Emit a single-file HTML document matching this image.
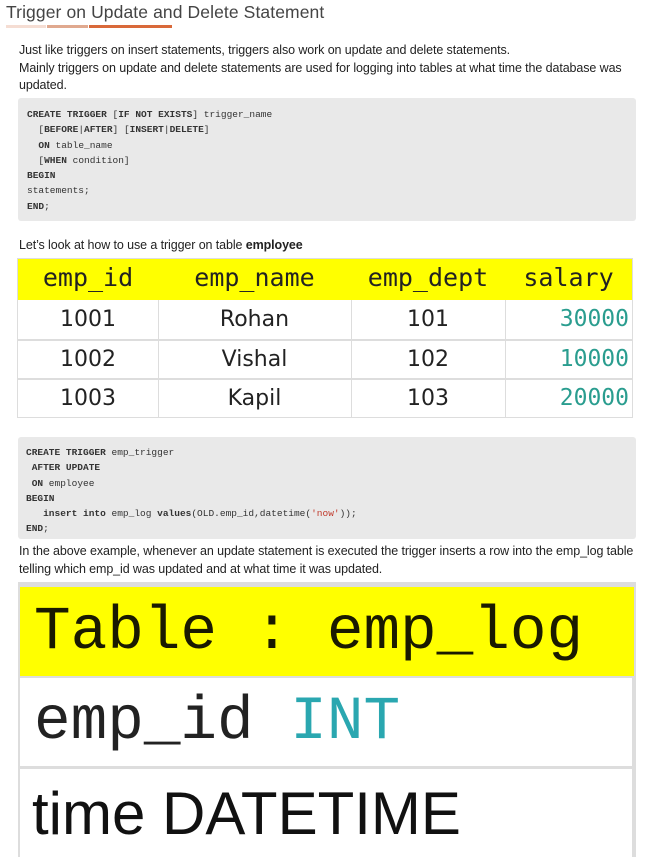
<!DOCTYPE html>
<html><head><meta charset="utf-8"><style>
*{margin:0;padding:0;box-sizing:border-box}
body{width:656px;height:857px;background:#fff;position:relative;overflow:hidden;font-family:"Liberation Sans","DejaVu Sans",sans-serif;color:#222}
.a{position:absolute;white-space:nowrap}
.t{font-size:12.5px;line-height:17.5px;letter-spacing:-0.1px}
.code{position:absolute;background:#e9e9e9;border-radius:3px;font-family:"Liberation Mono","DejaVu Sans Mono",monospace;font-size:9.5px;color:#333;white-space:pre}
.code div{height:15.3px;line-height:15.3px}
b{font-weight:bold}
</style></head><body>
<div class="a" style="left:6px;top:2px;font-size:17.5px;color:#444;letter-spacing:0.1px">Trigger on Update and Delete Statement</div>
<div class="a" style="left:6px;top:25px;width:40px;height:3px;background:#f5ddd3"></div>
<div class="a" style="left:47px;top:25px;width:41px;height:3px;background:#e0a98f"></div>
<div class="a" style="left:89px;top:25px;width:83px;height:3px;background:#d9693a"></div>

<div class="a t" style="left:19px;top:42px">Just like triggers on insert statements, triggers also work on update and delete statements.<br>Mainly triggers on update and delete statements are used for logging into tables at what time the database was<br>updated.</div>

<div class="code" style="left:18px;top:98px;width:618px;height:123px;padding:9px 0 0 9px"><div><b>CREATE TRIGGER</b> [<b>IF NOT EXISTS</b>] trigger_name</div><div>  [<b>BEFORE</b>|<b>AFTER</b>] [<b>INSERT</b>|<b>DELETE</b>]</div><div>  <b>ON</b> table_name</div><div>  [<b>WHEN</b> condition]</div><div><b>BEGIN</b></div><div>statements;</div><div><b>END</b>;</div></div>

<div class="a t" style="left:19px;top:237px">Let’s look at how to use a trigger on table <b>employee</b></div>

<div class="a" style="left:17px;top:258px;width:616px;height:160px;background:#fff;border:1px solid #ddd"></div>
<div class="a" style="left:18px;top:259px;width:614px;height:41px;background:#ffff00"></div>
<div class="a" style="left:158px;top:300px;width:1px;height:118px;background:#ddd"></div>
<div class="a" style="left:351px;top:300px;width:1px;height:118px;background:#ddd"></div>
<div class="a" style="left:505px;top:300px;width:1px;height:118px;background:#ddd"></div>
<div class="a" style="left:17px;top:339px;width:616px;height:2px;background:#ddd"></div>
<div class="a" style="left:17px;top:378px;width:616px;height:2px;background:#ddd"></div>
<div style="position:absolute;left:18px;top:259px;width:614px;font-family:'DejaVu Sans Mono',monospace;font-size:25px;color:#222">
<div class="a" style="left:0;width:140px;text-align:center;top:4px">emp_id</div>
<div class="a" style="left:140px;width:193px;text-align:center;top:4px">emp_name</div>
<div class="a" style="left:333px;width:154px;text-align:center;top:4px">emp_dept</div>
<div class="a" style="left:487px;width:127px;text-align:center;top:4px">salary</div>
</div>
<div style="position:absolute;left:18px;top:300px;width:614px;font-family:'DejaVu Sans',sans-serif;font-size:22px;color:#222">
<div class="a" style="left:0;width:140px;text-align:center;top:7px">1001</div>
<div class="a" style="left:140px;width:193px;text-align:center;top:7px">Rohan</div>
<div class="a" style="left:333px;width:154px;text-align:center;top:7px">101</div>
<div class="a" style="left:0;width:140px;text-align:center;top:47px">1002</div>
<div class="a" style="left:140px;width:193px;text-align:center;top:47px">Vishal</div>
<div class="a" style="left:333px;width:154px;text-align:center;top:47px">102</div>
<div class="a" style="left:0;width:140px;text-align:center;top:86px">1003</div>
<div class="a" style="left:140px;width:193px;text-align:center;top:86px">Kapil</div>
<div class="a" style="left:333px;width:154px;text-align:center;top:86px">103</div>
</div>
<div style="position:absolute;left:505px;top:300px;width:124px;font-family:'DejaVu Sans Mono',monospace;font-size:23px;color:#2a9d8f;text-align:right">
<div class="a" style="right:0;top:6px">30000</div>
<div class="a" style="right:0;top:46px">10000</div>
<div class="a" style="right:0;top:85px">20000</div>
</div>

<div class="code" style="left:18px;top:437px;width:618px;height:102px;padding:8px 0 0 8px"><div><b>CREATE TRIGGER</b> emp_trigger</div><div> <b>AFTER UPDATE</b></div><div> <b>ON</b> employee</div><div><b>BEGIN</b></div><div>   <b>insert into</b> emp_log <b>values</b>(OLD.emp_id,datetime(<span style="color:#c0392b">'now'</span>));</div><div><b>END</b>;</div></div>

<div class="a t" style="left:19px;top:543px">In the above example, whenever an update statement is executed the trigger inserts a row into the emp_log table<br>telling which emp_id was updated and at what time it was updated.</div>

<div class="a" style="left:18px;top:582px;width:618px;height:275px;background:#ddd"></div>
<div class="a" style="left:20px;top:587px;width:614px;height:89px;background:#ffff00"></div>
<div class="a" style="left:20px;top:678px;width:612px;height:88px;background:#fff"></div>
<div class="a" style="left:20px;top:769px;width:612px;height:88px;background:#fff"></div>
<div class="a" style="left:34px;top:598px;font-family:'Liberation Mono',monospace;font-size:61px;color:#1a1a00">Table : emp_log</div>
<div class="a" style="left:34px;top:688px;font-family:'Liberation Mono',monospace;font-size:61px;color:#222">emp_id <span style="color:#2aa7b0">INT</span></div>
<div class="a" style="left:32px;top:779px;font-family:'Liberation Sans',sans-serif;font-size:60px;color:#111">time DATETIME</div>
</body></html>
